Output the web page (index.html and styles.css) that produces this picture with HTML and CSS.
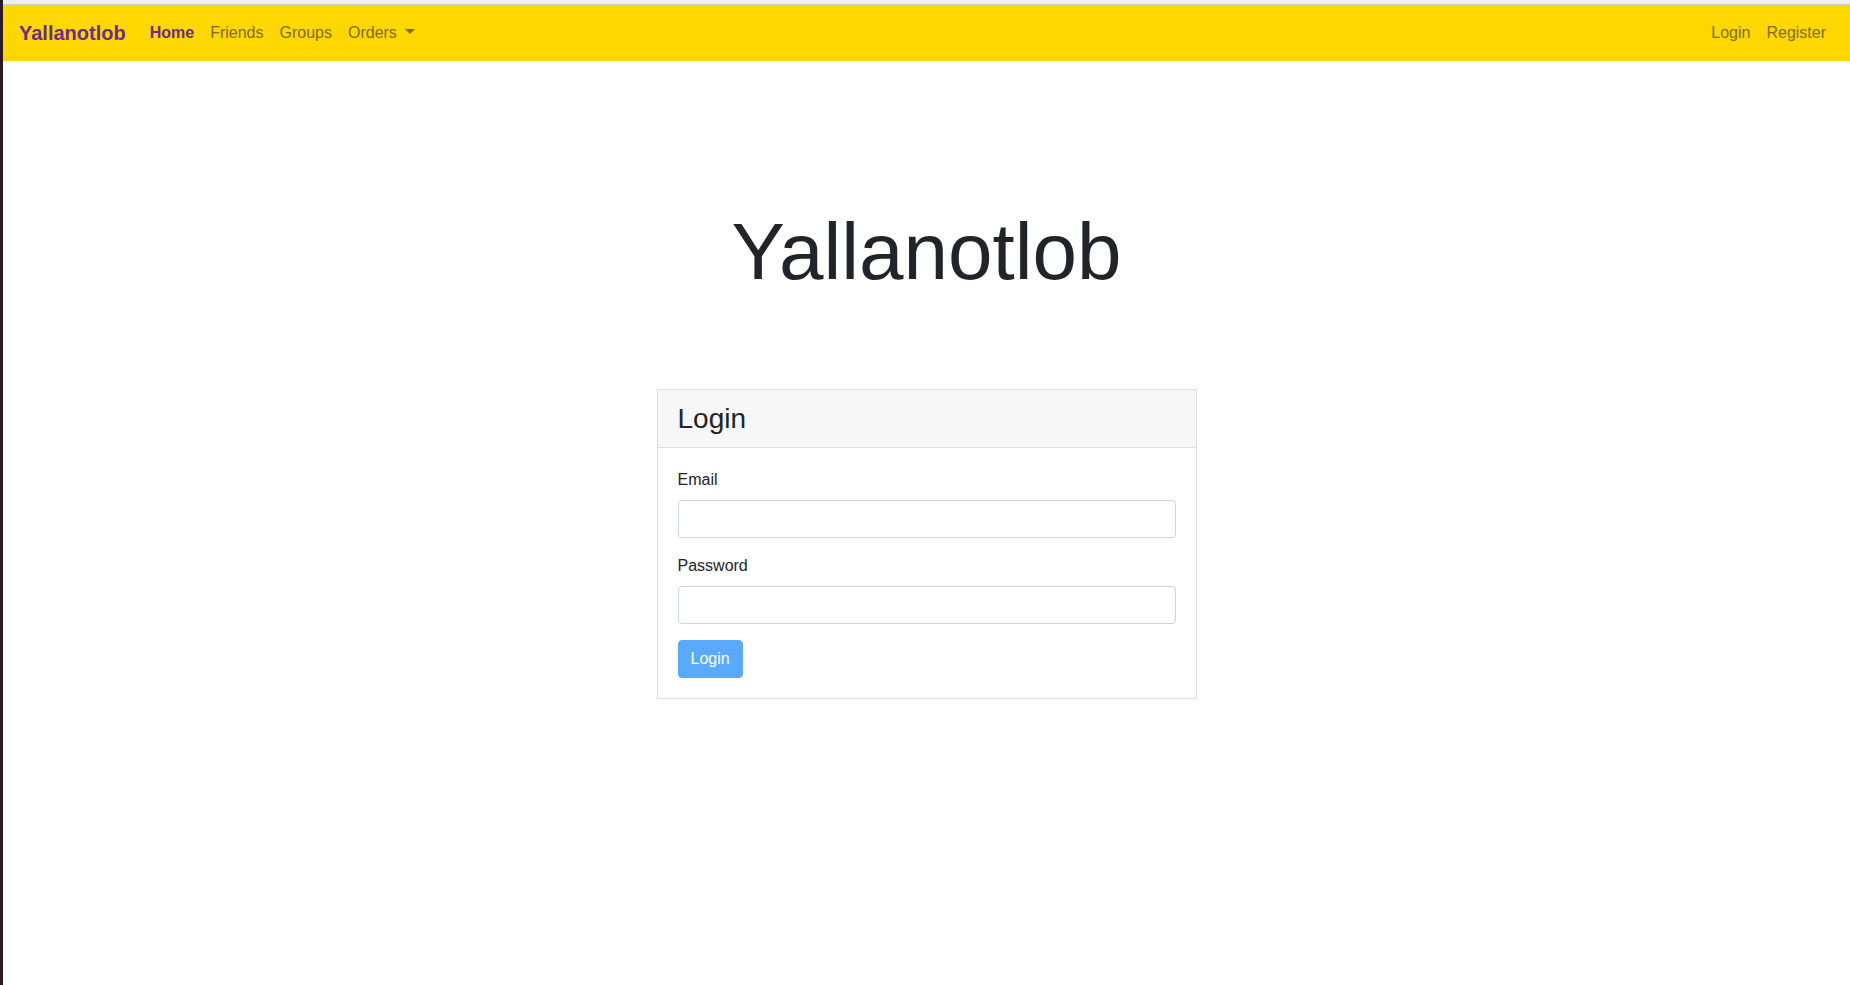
FILE: index.html
```html
<!DOCTYPE html>
<html lang="en">
<head>
<meta charset="utf-8">
<title>Yallanotlob</title>
<link rel="stylesheet" href="styles.css">
</head>
<body>
<div class="frame">
  <div class="topline"></div>
  <nav class="navbar">
    <a class="brand" href="#">Yallanotlob</a>
    <ul class="nav-list">
      <li><a class="nav-link active" href="#">Home</a></li>
      <li><a class="nav-link" href="#">Friends</a></li>
      <li><a class="nav-link" href="#">Groups</a></li>
      <li><a class="nav-link dropdown-toggle" href="#">Orders</a></li>
    </ul>
    <ul class="nav-list nav-right">
      <li><a class="nav-link" href="#">Login</a></li>
      <li><a class="nav-link" href="#">Register</a></li>
    </ul>
  </nav>
  <main class="container">
    <h1 class="title">Yallanotlob</h1>
    <div class="card">
      <div class="card-header"><h3>Login</h3></div>
      <div class="card-body">
        <div class="form-group">
          <label class="label" for="email">Email</label>
          <input class="input" id="email" type="email">
        </div>
        <div class="form-group">
          <label class="label" for="password">Password</label>
          <input class="input" id="password" type="password">
        </div>
        <button class="btn" type="button" disabled>Login</button>
      </div>
    </div>
  </main>
</div>
</body>
</html>
```

FILE: styles.css
```css
* { box-sizing: border-box; }
html, body { margin: 0; padding: 0; height: 100%; }
body {
  font-family: "Liberation Sans", Arial, sans-serif;
  font-size: 16px;
  line-height: 1.5;
  color: #212529;
  background: #fff;
}
.frame {
  min-height: 100%;
  border-left: 3px solid #2b1a24;
}
.topline {
  height: 5px;
  background: #efefef;
  border-bottom: 1px solid #cfcfcf;
}
.navbar {
  display: flex;
  align-items: center;
  height: 56px;
  padding: 8px 16px;
  background: #ffd700;
}
.brand {
  font-size: 20px;
  font-weight: bold;
  color: #6b2c8c;
  text-decoration: none;
  line-height: 30px;
  padding: 5px 0;
  margin-right: 16px;
}
.nav-list {
  display: flex;
  list-style: none;
  margin: 0;
  padding: 0;
}
.nav-right { margin-left: auto; }
.nav-link {
  display: block;
  padding: 8px;
  color: #806b00;
  text-decoration: none;
}
.nav-link.active {
  color: #6b2c8c;
  font-weight: bold;
}
.dropdown-toggle::after {
  content: "";
  display: inline-block;
  margin-left: 8px;
  vertical-align: 4px;
  border-top: 5px solid;
  border-right: 5px solid transparent;
  border-left: 5px solid transparent;
}
.container {
  width: 540px;
  margin: 0 auto;
}
.title {
  margin: 143px 0 89px;
  font-size: 80px;
  font-weight: normal;
  line-height: 1.2;
  text-align: center;
}
.card {
  border: 1px solid #dfdfdf;
  border-radius: 0;
  background: #fff;
}
.card-header {
  padding: 12px 20px;
  background: #f7f7f7;
  border-bottom: 1px solid #dfdfdf;
}
.card-header h3 {
  margin: 0;
  font-size: 28px;
  font-weight: 500;
  line-height: 33px;
}
.card-body { padding: 20px; }
.form-group { margin-bottom: 16px; }
.label {
  display: block;
  margin-bottom: 8px;
}
.input {
  display: block;
  width: 100%;
  height: 38px;
  padding: 6px 12px;
  border: 1px solid #ced4da;
  border-radius: 4px;
  background: #fff;
  font: inherit;
}
.btn {
  display: inline-block;
  padding: 6px 12px;
  font: inherit;
  line-height: 1.5;
  color: #fff;
  background: #59a9ff;
  border: 1px solid #59a9ff;
  border-radius: 4px;
}
```
